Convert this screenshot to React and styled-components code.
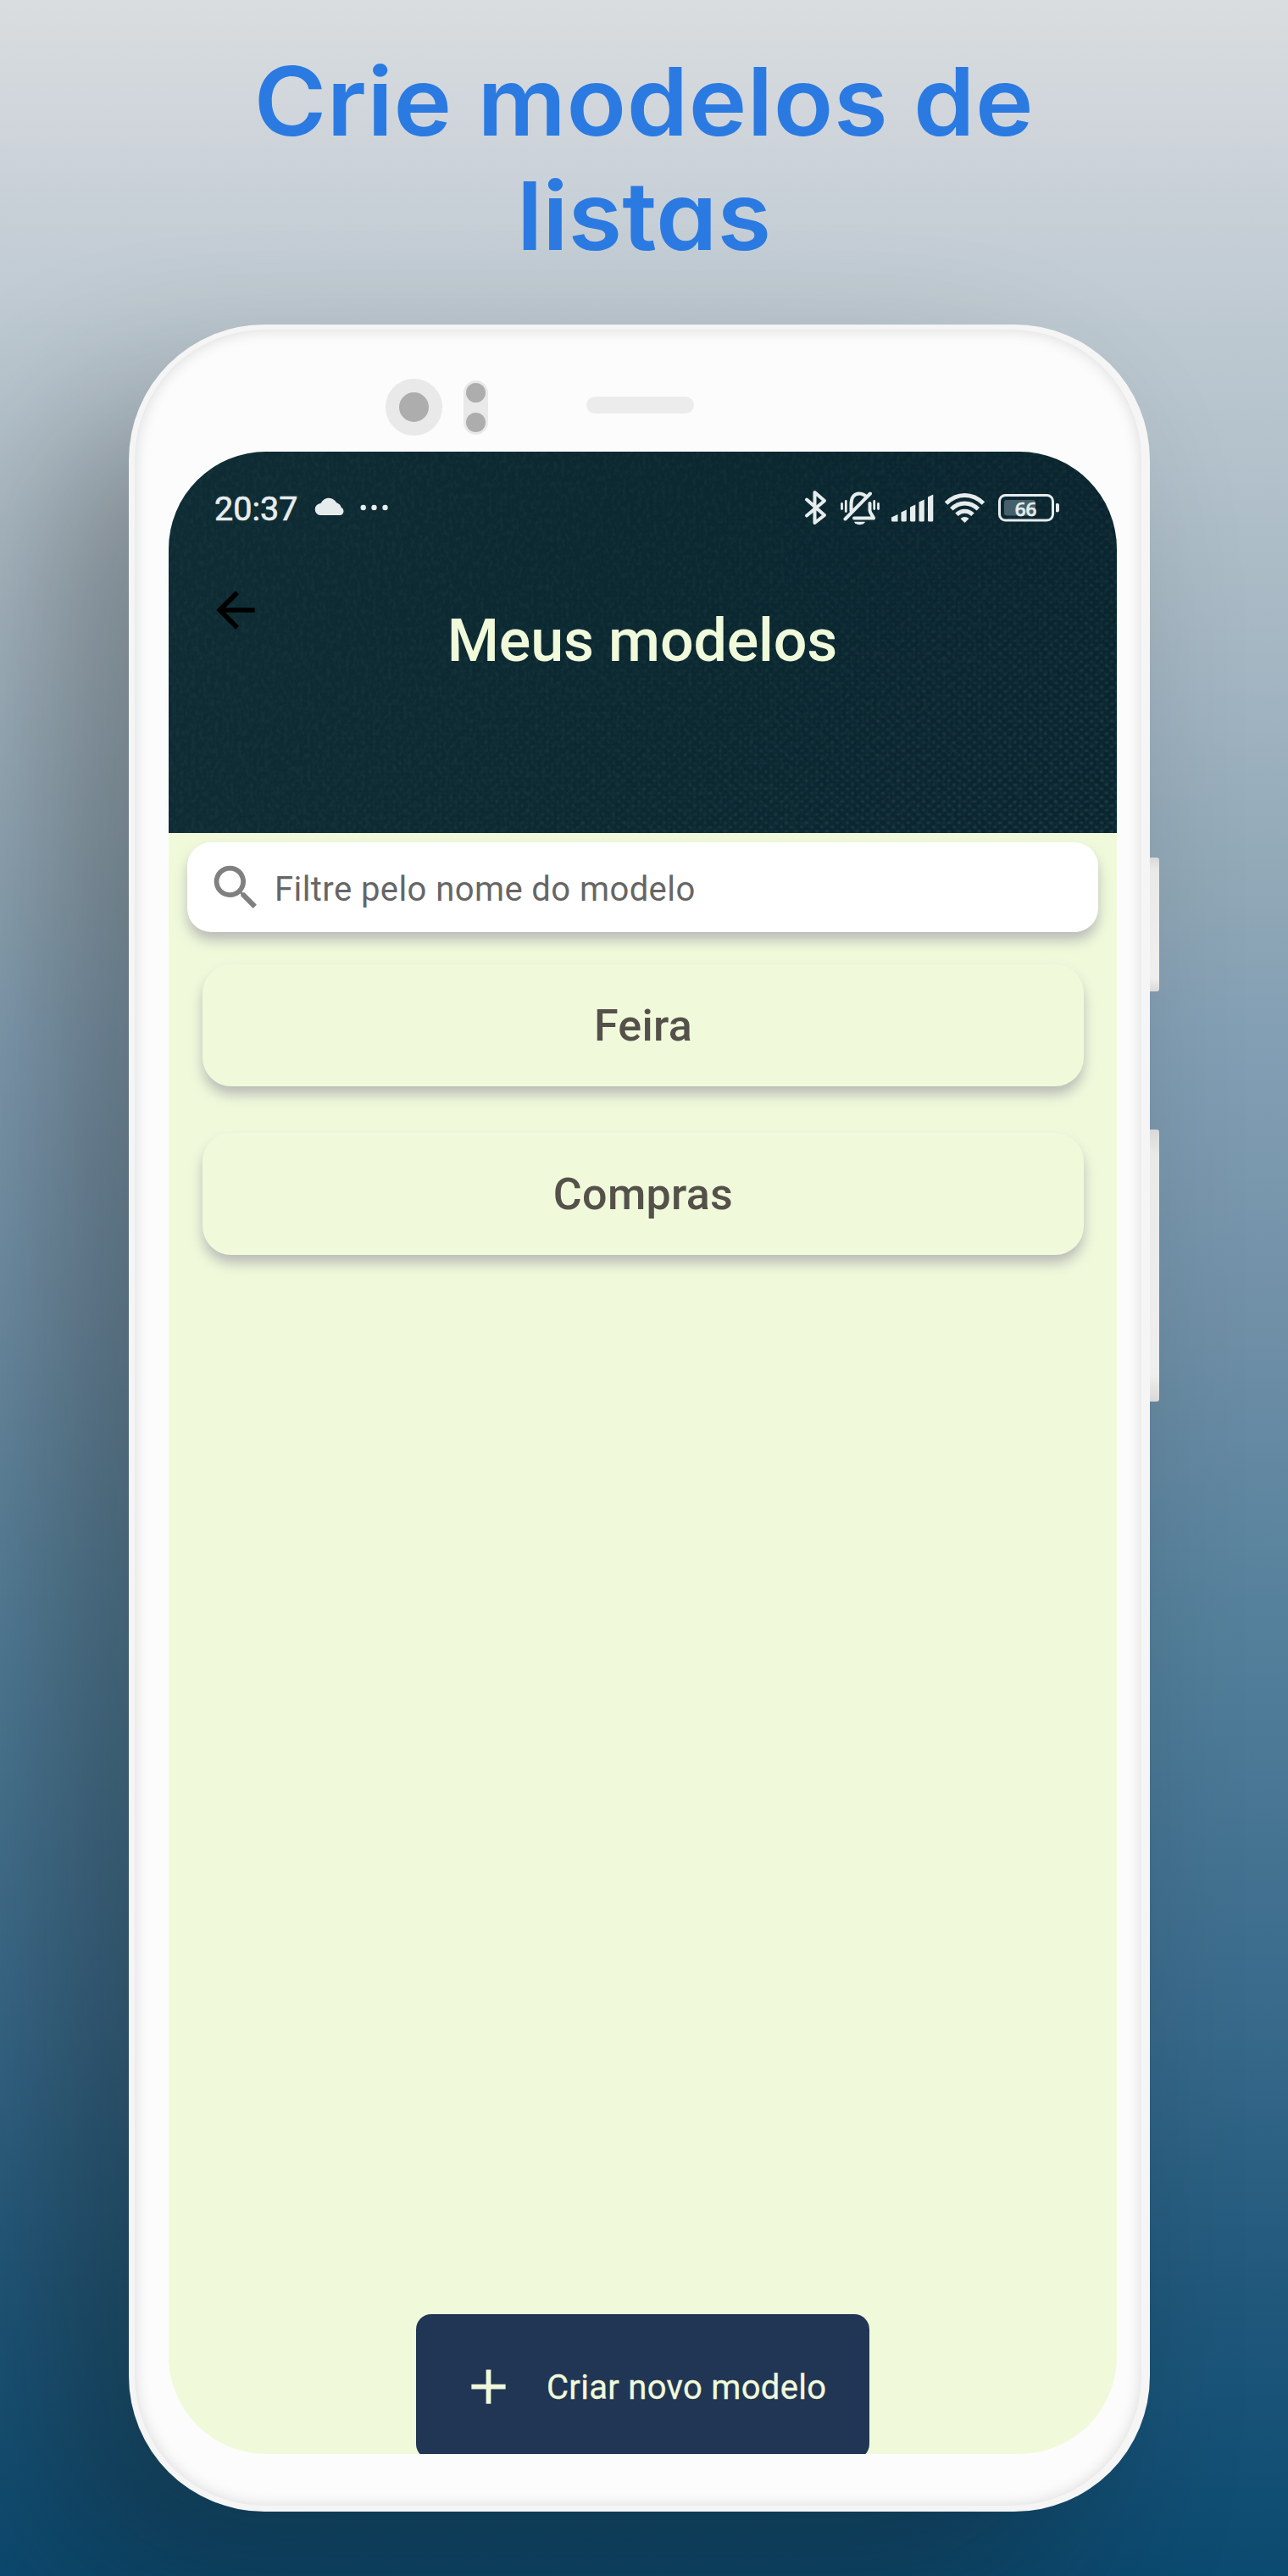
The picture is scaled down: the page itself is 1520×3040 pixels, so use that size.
import React from "react";
import styled, { createGlobalStyle, css } from "styled-components";

const Global = createGlobalStyle`
  * { box-sizing: border-box; }
  body { margin: 0; }
`;

const Poster = styled.main`
  width: 1520px;
  height: 3040px;
  overflow: hidden;
  display: flex;
  flex-direction: column;
  background: linear-gradient(180deg, #d9dddf 0%, #cbd2d9 6.5%, #bac7cf 14%, #a5b7c3 25%, #8fa7b6 35%, #839fb4 40%, #7090a7 51%, #54809b 63%, #396a8b 78%, #20587b 89%, #0b4a70 100%);
  font-family: Roboto, sans-serif;
`;

const Headline = styled.h1`
  margin: 0;
  height: 383px;
  padding-top: 52px;
  text-align: center;
  color: #2b7ae2;
  font: 600 112px/135px Inter, sans-serif;
  font-feature-settings: "cv11";
`;

const Line = styled.span`
  display: block;
  letter-spacing: ${(p) => p.$spacing}px;
  transform: scaleX(1.035);
`;

const Device = styled.div`
  display: flex;
  align-items: flex-start;
  margin-left: 152px;
`;

const Body = styled.div`
  width: 1205px;
  height: 2581px;
  flex: none;
  padding: 6px 10px 7px 7px;
  border-radius: 160px;
  background: #f5f5f5;
  box-shadow: -96px 98px 200px rgba(16, 12, 10, 0.32);
`;

const Bezel = styled.div`
  width: 1188px;
  height: 2568px;
  padding: 0 29px 0 40px;
  border-radius: 153px;
  background: #fcfcfc;
  box-shadow: inset 0 0 18px rgba(0, 0, 0, 0.14);
`;

const Sensors = styled.div`
  height: 144px;
  display: flex;
  align-items: flex-start;
  padding-left: 256px;
`;

const Lens = styled.div`
  width: 67px;
  height: 67px;
  margin-top: 58px;
  border-radius: 50%;
  border: 16px solid #e9e9e9;
  background: #adadad;
`;

const Flash = styled.div`
  width: 29px;
  height: 64px;
  margin: 60px 0 0 25px;
  padding: 3px;
  border-radius: 15px;
  background: #e9e9e9;
  display: flex;
  flex-direction: column;
  justify-content: space-between;
`;

const Dot = styled.i`
  width: 23px;
  height: 23px;
  border-radius: 50%;
  background: #adadad;
`;

const Speaker = styled.div`
  width: 127px;
  height: 20px;
  margin: 79px 0 0 116px;
  border-radius: 10px;
  background: #ececec;
`;

const Screen = styled.div`
  width: 1119px;
  height: 2363px;
  border-radius: 115px;
  overflow: hidden;
  background: #f0fadb;
  display: flex;
  flex-direction: column;
`;

const SideKeys = styled.div`
  position: relative;
  padding-top: 629px;
  display: flex;
  flex-direction: column;
  gap: 163px;
`;

const Key = styled.div`
  width: 11px;
  height: ${(p) => p.$height}px;
  border-radius: 0 3px 3px 0;
  background: linear-gradient(180deg, #d9d9d9, #e9e9e9 9%, #efefef 90%, #d9d9d9);
`;

const Header = styled.header`
  position: relative;
  isolation: isolate;
  height: 450px;
  flex: none;
  background: linear-gradient(100deg, #0f2c34, #0b2730 60%, #0a242e);

  &::before {
    content: "";
    position: absolute;
    inset: 0;
    z-index: -1;
    background:
      radial-gradient(ellipse 3.5px 2.6px at 3px 3px, rgba(80, 130, 135, 0.28), transparent),
      radial-gradient(ellipse 3.5px 2.6px at 9px 8px, rgba(80, 130, 135, 0.28), transparent);
    background-size: 12px 10px;
    mask-image: linear-gradient(150deg, rgba(0, 0, 0, 0.08) 35%, rgba(0, 0, 0, 0.35) 60%, #000 95%);
  }
`;

const Grain = styled.svg`
  position: absolute;
  inset: 0;
  z-index: -1;
  width: 100%;
  height: 100%;
  opacity: 0.045;
`;

const StatusBar = styled.div`
  height: 132px;
  padding: 0 67px 0 54px;
  display: flex;
  align-items: center;
  color: #e6eced;
`;

const Clock = styled.span`
  width: 118px;
  font-size: 39.5px;
  line-height: 48px;
  padding-top: 4px;
  -webkit-text-stroke: 0.7px currentColor;
`;

const StatusIcons = styled.div`
  margin-left: auto;
  display: flex;
`;

const TitleRow = styled.div`
  display: grid;
  grid-template-columns: 80px 1fr 80px;
  align-items: start;
  padding: 0 44px 0 43px;
`;

const BackIcon = styled.svg`
  width: 68px;
  height: 68px;
  margin-top: 21px;
  margin-left: 2px;
`;

const Title = styled.h2`
  margin: 49px 0 0;
  text-align: center;
  color: #f0fadb;
  font-size: 70px;
  line-height: 84px;
  font-weight: 500;
  letter-spacing: -0.15px;
  white-space: nowrap;
`;

const raised = css`
  box-shadow: 0 10px 16px -1px rgba(120, 112, 140, 0.48);
`;

const Search = styled.label`
  width: 1075px;
  height: 106px;
  flex: none;
  margin: 11px 0 38px 22px;
  padding-left: 23px;
  border-radius: 28px;
  background: #fff;
  display: flex;
  align-items: center;
  gap: 11px;
  color: #666;
  font-size: 40px;
  letter-spacing: 0.42px;
  ${raised}
`;

const Placeholder = styled.span`
  padding-top: 4px;
`;

const List = styled.div`
  padding: 0 39px 0 40px;
  display: flex;
  flex-direction: column;
  gap: 55px;
`;

const Card = styled.div`
  height: 144px;
  border-radius: 34px;
  background: #f0fadb;
  display: flex;
  align-items: center;
  justify-content: center;
  color: #55514a;
  font-size: 52px;
  font-weight: 500;
  letter-spacing: 0.3px;
  ${raised}
`;

const CreateButton = styled.button`
  width: 535px;
  height: 171px;
  flex: none;
  margin: auto 0 -6px 292px;
  padding: 0 0 0 51px;
  border: 0;
  border-radius: 18px;
  background: #213655;
  color: #f0fadb;
  display: flex;
  align-items: center;
  gap: 34px;
  font: 400 40px/48px Roboto, sans-serif;
  letter-spacing: 0.3px;
  -webkit-text-stroke: 0.3px currentColor;
`;

const ButtonLabel = styled.span`
  padding-top: 2px;
`;

function Cloud() {
  return (
    <svg width="90" height="32" viewBox="371 583 90 32" fill="currentColor">
      <path d="M378 608a7 7 0 0 1-.8-13.800c1.500-.2 1.700-.4 2-1.200a10 10 0 0 1 16.500-1.700c1 1.500 1.500 2.200 3 2.800a7 7 0 0 1 4 4.600 5 5 0 0 1-1 9.300z" />
      <circle cx="428.700" cy="599" r="3.200" />
      <circle cx="441.500" cy="599" r="3.200" />
      <circle cx="454.500" cy="599" r="3.200" />
    </svg>
  );
}

function SystemIcons() {
  return (
    <svg width="302" height="44" viewBox="949 577 302 44" fill="none" stroke="currentColor" strokeWidth="4" strokeLinecap="round" strokeLinejoin="round">
      <path d="M952 589.500L973 608l-11.500 9v-36L973 591l-21 17.500" />
      <path d="M1004.500 603v-8c0-8 3.500-12.500 9.500-12.500 3 0 5 .8 7 2.300M1027 582.500L997.500 612.500M1026.500 594v8.500c0 3 3.500 6 4.500 9h-23" />
      <path d="M993.500 594.500v6M998.300 591.500v12M1036.500 594.500v6M1031.700 591.500v9" strokeWidth="2.800" />
      <path d="M1008 615.800h13c-1.500 4.500-11.500 4.500-13 0z" fill="currentColor" stroke="none" />
      <g fill="currentColor" stroke="none">
        <path d="M1052 610.500l7.500-3.500v8.500h-6q-1.500 0-1.500-1.500z" />
        <path d="M1063.500 604.500l6.300-3v12.500q0 1.500-1.500 1.500h-3.300q-1.500 0-1.500-1.500z" />
        <path d="M1074 598.500l6.300-3v18.500q0 1.500-1.500 1.500h-3.300q-1.500 0-1.500-1.500z" />
        <path d="M1084.500 592.500l6.300-3v24.500q0 1.500-1.500 1.500h-3.300q-1.500 0-1.500-1.500z" />
        <path d="M1095 586.500l6.300-3v30.500q0 1.500-1.500 1.500h-3.300q-1.500 0-1.500-1.500z" />
      </g>
      <g strokeWidth="5" strokeLinecap="butt">
        <path d="M1116.500 594c13-12.800 31-12.800 44 0M1122.800 600.800c9.500-9 22-9 31.500 0M1129 607.300c5.500-5.500 13.500-5.500 19 0" />
      </g>
      <path d="M1133.500 612c3-2.800 7-2.800 10 0l-5 5z" fill="currentColor" stroke="none" />
      <rect x="1179.500" y="584.500" width="63" height="29.500" rx="7" strokeWidth="3" />
      <rect x="1185" y="590" width="37" height="18.500" rx="3" fill="#45606a" stroke="none" />
      <path d="M1246 594.500c3-1 4 0 4 2v5.500c0 2-1 3-4 2z" fill="currentColor" stroke="none" />
      <text x="1210.500" y="608.500" textAnchor="middle" fill="currentColor" stroke="currentColor" strokeWidth="0.700" fontFamily="Noto Sans, sans-serif" fontWeight="500" fontSize="22.500">66</text>
    </svg>
  );
}

export default function App() {
  return (
    <Poster>
      <Global />
      <Headline>
        <Line $spacing={0.6}>Crie modelos de</Line>
        <Line $spacing={0}>listas</Line>
      </Headline>
      <Device>
        <Body>
          <Bezel>
            <Sensors>
              <Lens />
              <Flash><Dot /><Dot /></Flash>
              <Speaker />
            </Sensors>
            <Screen>
              <Header>
                <Grain aria-hidden="true">
                  <filter id="grain">
                    <feTurbulence type="fractalNoise" baseFrequency="0.22 0.14" numOctaves="2" seed="4" />
                    <feColorMatrix values="0 0 0 0 0.3  0 0 0 0 0.5  0 0 0 0 0.52  3 0 0 0 -1.2" />
                  </filter>
                  <rect width="100%" height="100%" filter="url(#grain)" />
                </Grain>
                <StatusBar>
                  <Clock>20:37</Clock>
                  <Cloud />
                  <StatusIcons><SystemIcons /></StatusIcons>
                </StatusBar>
                <TitleRow>
                  <BackIcon viewBox="0 0 24 24" fill="#000">
                    <path d="M20 11H7.830l5.590-5.590L12 4l-8 8 8 8 1.410-1.410L7.830 13H20z" />
                  </BackIcon>
                  <Title>Meus modelos</Title>
                </TitleRow>
              </Header>
              <Search>
                <svg width="69" height="69" viewBox="0 0 24 24" fill="#808080">
                  <path d="M15.500 14h-.79l-.28-.27A6.470 6.470 0 0 0 16 9.500 6.500 6.500 0 1 0 9.500 16c1.610 0 3.090-.59 4.230-1.570l.27.28v.79l5 4.990L20.490 19zm-6 0C7.010 14 5 11.990 5 9.500S7.010 5 9.500 5 14 7.010 14 9.500 11.990 14 9.500 14z" />
                </svg>
                <Placeholder>Filtre pelo nome do modelo</Placeholder>
              </Search>
              <List>
                <Card>Feira</Card>
                <Card>Compras</Card>
              </List>
              <CreateButton>
                <svg width="69" height="69" viewBox="0 0 24 24" fill="currentColor">
                  <path d="M19 13h-6v6h-2v-6H5v-2h6V5h2v6h6z" />
                </svg>
                <ButtonLabel>Criar novo modelo</ButtonLabel>
              </CreateButton>
            </Screen>
          </Bezel>
        </Body>
        <SideKeys>
          <Key $height={158} />
          <Key $height={321} />
        </SideKeys>
      </Device>
    </Poster>
  );
}
